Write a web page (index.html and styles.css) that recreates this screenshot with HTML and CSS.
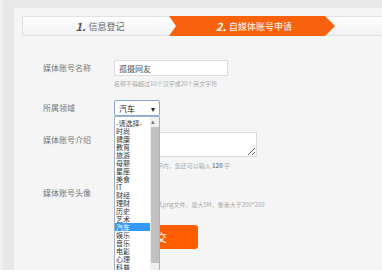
FILE: index.html
```html
<!DOCTYPE html>
<html lang="zh-CN">
<head>
  <meta charset="UTF-8" />
  <title>自媒体账号申请</title>
  <link rel="stylesheet" href="styles.css">
</head>
<body>
  <div class="page">
    <div class="panel">
      <div class="steps">
        <div class="step step-done"><b>1.</b> 信息登记</div>
        <div class="step step-active"><b>2.</b> 自媒体账号申请</div>
      </div>

      <form class="form">
        <div class="row">
          <label class="label">媒体账号名称</label>
          <input class="text" type="text" value="孤摄网友" />
        </div>
        <p class="hint">名称不得超过10个汉字或20个英文字符</p>

        <div class="row row-select">
          <label class="label">所属领域</label>
          <div class="select">
            <span>汽车</span>
            <span class="arrow">▾</span>
            <div class="options">
              <div class="list">
                <div>-请选择-</div>
                <div>时尚</div>
                <div>健康</div>
                <div>教育</div>
                <div>旅游</div>
                <div>母婴</div>
                <div>星座</div>
                <div>美食</div>
                <div>IT</div>
                <div>财经</div>
                <div>理财</div>
                <div>历史</div>
                <div>艺术</div>
                <div class="picked">汽车</div>
                <div>娱乐</div>
                <div>音乐</div>
                <div>电影</div>
                <div>心理</div>
                <div>科普</div>
              </div>
              <div class="scroll">
                <span class="up">▴</span>
                <span class="thumb"></span>
              </div>
            </div>
          </div>
        </div>

        <div class="row row-intro">
          <label class="label">媒体账号介绍</label>
          <textarea class="area"></textarea>
        </div>
        <p class="hint hint-intro">简介请在10-120字内，您还可以输入 <b>120</b> 字</p>

        <div class="row row-avatar">
          <label class="label">媒体账号头像</label>
        </div>
        <p class="hint hint-avatar">头像请上传jpg,gif,png文件，最大5M，像素大于200*200</p>

        <button class="submit" type="button">提交</button>
      </form>
    </div>
  </div>
</body>
</html>
```

FILE: styles.css
```css
body {
  margin: 0;
  background: #fff;
  font-family: "Noto Sans CJK SC", "Noto Sans", sans-serif;
}
.page {
  height: 270px;
  overflow: hidden;
  background: #e8e8e8;
  padding: 8px 0 0 14px;
  box-sizing: border-box;
  border-left: 3px solid #f0f0f0;
}
.panel {
  height: 262px;
  background: #f5f5f5;
  margin-left: -3px;
  padding-top: 8px;
  box-sizing: border-box;
}
.steps {
  display: flex;
  margin-left: 8px;
  height: 20px;
  border: 1px solid #e2e2e2;
  border-right: none;
  background: linear-gradient(#fff, #f1f1f1);
  box-sizing: border-box;
}
.step {
  display: flex;
  align-items: center;
  justify-content: center;
  font-size: 9px;
  color: #666;
}
.step b {
  font-size: 11px;
  font-style: italic;
  margin-right: 3px;
  color: #555;
}
.step-done {
  width: 146px;
  padding-left: 8px;
  box-sizing: border-box;
}
.step-active {
  width: 166px;
  margin-top: -1px;
  height: 20px;
  padding-left: 4px;
  box-sizing: border-box;
  background: #f8620c;
  color: #fff;
  clip-path: polygon(0 0, 156px 0, 100% 50%, 156px 100%, 0 100%, 7px 50%);
}
.step-active b {
  color: #fff;
}

.form {
  padding-left: 29px;
  padding-top: 24px;
}
.row {
  display: flex;
  align-items: center;
}
.label {
  width: 71px;
  font-size: 8px;
  line-height: 10px;
  color: #777;
}
.text {
  width: 114px;
  height: 16px;
  box-sizing: border-box;
  margin: 0;
  border: 1px solid #dcdcdc;
  padding: 0 4px;
  font-family: inherit;
  font-size: 8px;
  color: #555;
  background: #fff;
}
.hint {
  margin: 4px 0 0 71px;
  font-size: 6px;
  line-height: 8px;
  color: #aaa;
}
.hint b {
  color: #888;
}

.row-select {
  margin-top: 12px;
}
.select {
  position: relative;
  width: 46px;
  height: 16px;
  box-sizing: border-box;
  border: 1px solid #86a9d4;
  border-radius: 2px;
  background: #fff;
  font-size: 8px;
  color: #222;
  display: flex;
  align-items: center;
  justify-content: space-between;
  padding: 0 4px;
}
.arrow {
  font-size: 8px;
}
.options {
  position: absolute;
  left: -1px;
  top: 15px;
  width: 46px;
  height: 170px;
  box-sizing: border-box;
  border: 1px solid #9fb4cc;
  background: #fff;
  display: flex;
}
.list {
  flex: 1;
  padding-top: 2px;
  font-size: 7px;
  line-height: 8px;
  color: #333;
}
.list div {
  padding-left: 1px;
  height: 8px;
  white-space: nowrap;
  overflow: hidden;
}
.list .picked {
  background: #3399ff;
  color: #fff;
}
.scroll {
  position: relative;
  width: 9px;
  background: #f0f0f0;
}
.up {
  position: absolute;
  top: 0;
  left: 1px;
  font-size: 7px;
  line-height: 8px;
  color: #777;
}
.thumb {
  position: absolute;
  left: 1px;
  right: 0;
  top: 10px;
  height: 136px;
  background: #c1c1c1;
}

.row-intro {
  margin-top: 16px;
  align-items: flex-start;
}
.row-intro .label {
  padding-top: 3px;
}
.area {
  width: 143px;
  height: 25px;
  box-sizing: border-box;
  margin: 0;
  border: 1px solid #dcdcdc;
  background: #fff;
}
.hint-intro {
  margin-top: 5px;
}
.row-avatar {
  margin-top: 18px;
}
.hint-avatar {
  margin-top: 3px;
}
.submit {
  display: block;
  margin: 16px 0 0 71px;
  width: 84px;
  height: 24px;
  border: none;
  border-radius: 3px;
  background: #ff5d00;
  color: #fff;
  font-family: inherit;
  font-size: 11px;
}
```
